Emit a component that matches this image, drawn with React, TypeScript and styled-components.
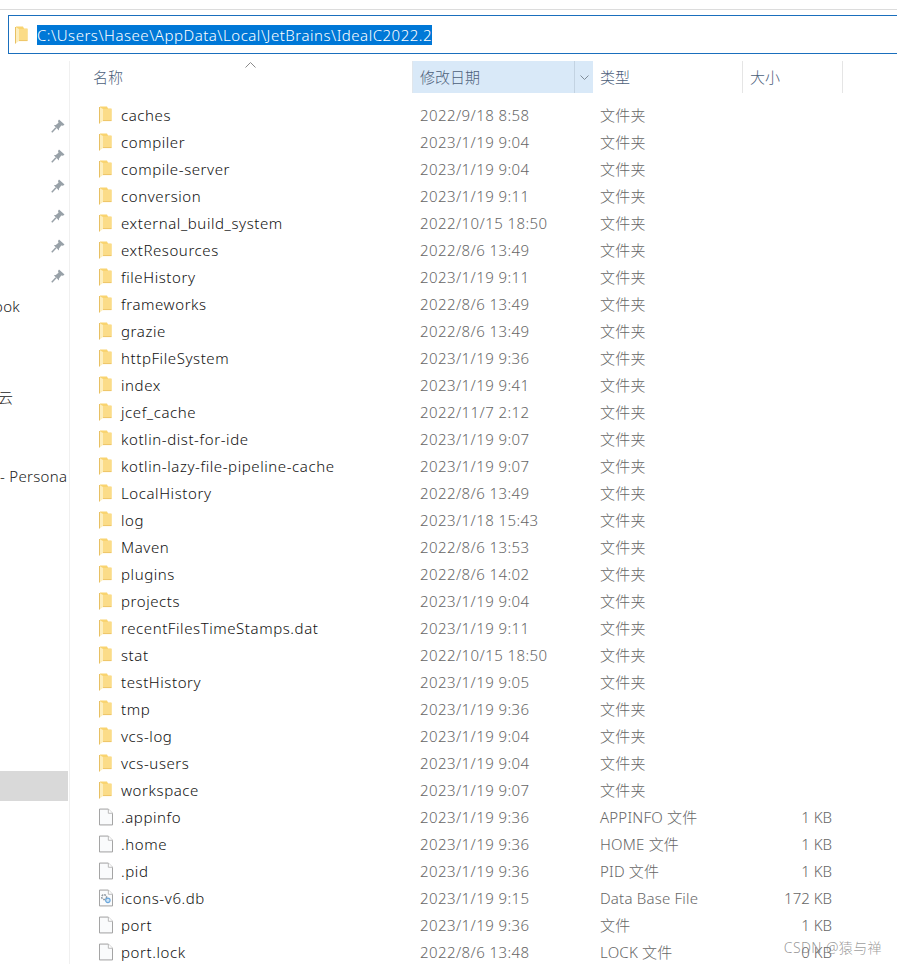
import React from "react";
import styled, { createGlobalStyle } from "styled-components";

const GlobalStyle = createGlobalStyle`
  html, body {
    margin: 0;
    background: #fff;
  }
  body {
    font-family: "Noto Sans", "Noto Sans CJK SC", sans-serif;
    font-size: 15px;
    font-weight: 300;
    overflow: hidden;
  }
`;

const Page = styled.div`
  position: relative;
  width: 897px;
  height: 964px;
  overflow: hidden;
  padding-top: 9px;
  box-sizing: border-box;
`;

const TopRule = styled.div`
  height: 1px;
  background: #dcdcdc;
  margin-bottom: 5px;
`;

const AddressBar = styled.div`
  height: 39px;
  margin-left: 8px;
  box-sizing: border-box;
  border: 1px solid #1a6fbd;
  border-right: none;
  display: flex;
  align-items: center;
  padding-left: 6px;
  gap: 9px;
`;

const AddressText = styled.span`
  background: #0078d7;
  color: #fff;
  font-size: 15px;
  line-height: 20px;
  letter-spacing: 0.51px;
  white-space: nowrap;
`;

const Body = styled.div`
  display: flex;
  height: 911px;
`;

const Sidebar = styled.div`
  width: 70px;
  flex: none;
  box-sizing: border-box;
  border-right: 1px solid #f0f0f0;
  padding-top: 50px;
  margin-top: 7px;
`;

const NavRow = styled.div<{ $gap?: number; $selected?: boolean }>`
  width: 68px;
  height: 30px;
  margin-top: ${(p) => p.$gap ?? 0}px;
  display: flex;
  align-items: center;
  color: #1a1a1a;
  font-size: 15px;
  letter-spacing: 0.3px;
  white-space: nowrap;
  overflow: hidden;
  background: ${(p) => (p.$selected ? "#d9d9d9" : "transparent")};
`;

const ClippedLabel = styled.span<{ $shift: number }>`
  margin-left: ${(p) => p.$shift}px;
`;

const PinSlot = styled.div`
  margin-left: 51px;
  display: flex;
`;

const Main = styled.div`
  flex: 1;
  min-width: 0;
  padding-top: 7px;
`;

const Header = styled.div`
  position: relative;
  display: grid;
  grid-template-columns: 339px 181px 150px 100px;
  height: 32px;
  margin-left: 3px;
  color: #4c607a;
  font-size: 15px;
`;

const HeadCell = styled.div<{ $active?: boolean; $divider?: boolean }>`
  display: flex;
  align-items: center;
  box-sizing: border-box;
  padding-left: 20px;
  padding-bottom: 1px;
  background: ${(p) => (p.$active ? "#d9e9f8" : "transparent")};
  border-right: ${(p) => (p.$divider ? "1px solid #e5e5e5" : "none")};
`;

const DateHead = styled(HeadCell)`
  padding-left: 7px;
  border-left: 1px solid #e0e6ec;
  justify-content: space-between;
  padding-right: 0;
`;

const TypeHead = styled(HeadCell)`
  padding-left: 7px;
`;

const SizeHead = styled(HeadCell)`
  padding-left: 7px;
`;

const SortButton = styled.div`
  width: 19px;
  height: 32px;
  margin-bottom: -1px;
  box-sizing: border-box;
  border-left: 1px solid #c3d3e2;
  display: flex;
  align-items: center;
  justify-content: center;
`;

const SortCaret = styled.div`
  position: absolute;
  left: 172px;
  top: 1px;
  line-height: 0;
`;

const List = styled.div`
  margin-top: 8px;
  margin-left: 29px;
`;

const Row = styled.div`
  display: grid;
  grid-template-columns: 314px 180px 150px 89px;
  height: 27px;
  align-items: center;
  white-space: nowrap;
`;

const NameCell = styled.div`
  display: flex;
  align-items: center;
  color: #111;
  letter-spacing: 0.58px;
  gap: 8px;
`;

const IconSlot = styled.div`
  width: 14px;
  display: flex;
  flex: none;
`;

const InfoCell = styled.div<{ $spacing?: number }>`
  color: #666;
  font-size: 15px;
  letter-spacing: ${(p) => p.$spacing ?? 0}px;
  padding-left: 7px;
`;

const SizeCell = styled.div`
  color: #666;
  font-size: 15px;
  text-align: right;
`;

const Watermark = styled.div`
  position: absolute;
  right: 15px;
  bottom: 7px;
  color: rgba(120, 120, 120, 0.75);
  font-size: 14px;
  letter-spacing: 0.4px;
  white-space: nowrap;
`;

function FolderIcon() {
  return (
    <svg width="13" height="18" viewBox="0 0 13 18">
      <path d="M1 .5 H8 L9 2.5 H12.5 V14.5 H1 Z" fill="#f9d470" />
      <path d="M4 3 H12.5 V14.5 H4 Z" fill="#fbdc88" />
      <path d="M.5 1 L4 3 V15 L.5 17.5 Z" fill="#fdeebd" />
      <path d="M.5 1 V17.5" stroke="#e8c063" strokeWidth="1" />
      <path d="M4 14.6 H12.5" stroke="#eec465" strokeWidth="1" />
    </svg>
  );
}

function FileIcon() {
  return (
    <svg width="15" height="18" viewBox="0 0 15 18">
      <path d="M.5.5 H10 L14.5 5 V17.5 H.5 Z" fill="#fafbfc" stroke="#9a9a9a" />
      <path d="M10 .5 V5 H14.5" fill="#fff" stroke="#b5b5b5" />
    </svg>
  );
}

function DbIcon() {
  return (
    <svg width="15" height="18" viewBox="0 0 15 18">
      <path d="M.5.5 H10 L14.5 5 V17.5 H.5 Z" fill="#fafbfc" stroke="#9a9a9a" />
      <path d="M10 .5 V5 H14.5" fill="#fff" stroke="#b5b5b5" />
      <circle cx="5.5" cy="8" r="2.6" fill="none" stroke="#8f979e" strokeWidth="1.6" strokeDasharray="2 1" />
      <circle cx="9.5" cy="11.5" r="2.4" fill="#cfe4f5" stroke="#6aa6db" strokeWidth="1.2" />
    </svg>
  );
}

function PinIcon() {
  return (
    <svg width="14" height="14" viewBox="0 0 14 14">
      <path d="M8 .5 L13.5 5.5 L12 6.8 L10.3 6.4 L8 9.5 L8 11.5 L2.8 6.3 L4.8 6 L7.5 3.8 L7 2 Z" fill="#98a1a8" />
      <path d="M5 8.8 L.8 13.2" stroke="#98a1a8" strokeWidth="1.5" />
    </svg>
  );
}

type Entry = { name: string; date: string; type?: string; size?: string; kind?: "file" | "db" };

const entries: Entry[] = [
  { name: "caches", date: "2022/9/18 8:58" },
  { name: "compiler", date: "2023/1/19 9:04" },
  { name: "compile-server", date: "2023/1/19 9:04" },
  { name: "conversion", date: "2023/1/19 9:11" },
  { name: "external_build_system", date: "2022/10/15 18:50" },
  { name: "extResources", date: "2022/8/6 13:49" },
  { name: "fileHistory", date: "2023/1/19 9:11" },
  { name: "frameworks", date: "2022/8/6 13:49" },
  { name: "grazie", date: "2022/8/6 13:49" },
  { name: "httpFileSystem", date: "2023/1/19 9:36" },
  { name: "index", date: "2023/1/19 9:41" },
  { name: "jcef_cache", date: "2022/11/7 2:12" },
  { name: "kotlin-dist-for-ide", date: "2023/1/19 9:07" },
  { name: "kotlin-lazy-file-pipeline-cache", date: "2023/1/19 9:07" },
  { name: "LocalHistory", date: "2022/8/6 13:49" },
  { name: "log", date: "2023/1/18 15:43" },
  { name: "Maven", date: "2022/8/6 13:53" },
  { name: "plugins", date: "2022/8/6 14:02" },
  { name: "projects", date: "2023/1/19 9:04" },
  { name: "recentFilesTimeStamps.dat", date: "2023/1/19 9:11" },
  { name: "stat", date: "2022/10/15 18:50" },
  { name: "testHistory", date: "2023/1/19 9:05" },
  { name: "tmp", date: "2023/1/19 9:36" },
  { name: "vcs-log", date: "2023/1/19 9:04" },
  { name: "vcs-users", date: "2023/1/19 9:04" },
  { name: "workspace", date: "2023/1/19 9:07" },
  { name: ".appinfo", date: "2023/1/19 9:36", type: "APPINFO 文件", size: "1 KB", kind: "file" },
  { name: ".home", date: "2023/1/19 9:36", type: "HOME 文件", size: "1 KB", kind: "file" },
  { name: ".pid", date: "2023/1/19 9:36", type: "PID 文件", size: "1 KB", kind: "file" },
  { name: "icons-v6.db", date: "2023/1/19 9:15", type: "Data Base File", size: "172 KB", kind: "db" },
  { name: "port", date: "2023/1/19 9:36", type: "文件", size: "1 KB", kind: "file" },
  { name: "port.lock", date: "2022/8/6 13:48", type: "LOCK 文件", size: "0 KB", kind: "file" },
];

export default function App() {
  return (
    <Page>
      <GlobalStyle />
      <TopRule />
      <AddressBar>
        <FolderIcon />
        <AddressText>C:\Users\Hasee\AppData\Local\JetBrains\IdealC2022.2</AddressText>
      </AddressBar>
      <Body>
        <Sidebar>
          {[0, 1, 2, 3, 4, 5].map((i) => (
            <NavRow key={i}>
              <PinSlot>
                <PinIcon />
              </PinSlot>
            </NavRow>
          ))}
          <NavRow>
            <ClippedLabel $shift={-6}>ook</ClippedLabel>
          </NavRow>
          <NavRow $gap={60}>
            <ClippedLabel $shift={-2}>云</ClippedLabel>
          </NavRow>
          <NavRow $gap={50}>- Persona</NavRow>
          <NavRow $gap={280} $selected />
        </Sidebar>
        <Main>
          <Header>
            <SortCaret>
              <svg width="11" height="6" viewBox="0 0 11 6">
                <path d="M.5 5.5 L5.5.5 L10.5 5.5" fill="none" stroke="#8a8a8a" />
              </svg>
            </SortCaret>
            <HeadCell>名称</HeadCell>
            <DateHead $active>
              修改日期
              <SortButton>
                <svg width="9" height="5" viewBox="0 0 9 5">
                  <path d="M.5.5 L4.5 4.5 L8.5.5" fill="none" stroke="#7f8c99" />
                </svg>
              </SortButton>
            </DateHead>
            <TypeHead $divider>类型</TypeHead>
            <SizeHead $divider>大小</SizeHead>
          </Header>
          <List>
            {entries.map((e) => (
              <Row key={e.name}>
                <NameCell>
                  <IconSlot>
                    {e.kind === "file" ? <FileIcon /> : e.kind === "db" ? <DbIcon /> : <FolderIcon />}
                  </IconSlot>
                  {e.name}
                </NameCell>
                <InfoCell $spacing={0.42}>{e.date}</InfoCell>
                <InfoCell $spacing={0.2}>{e.type ?? "文件夹"}</InfoCell>
                <SizeCell>{e.size}</SizeCell>
              </Row>
            ))}
          </List>
        </Main>
      </Body>
      <Watermark>CSDN @猿与禅</Watermark>
    </Page>
  );
}
